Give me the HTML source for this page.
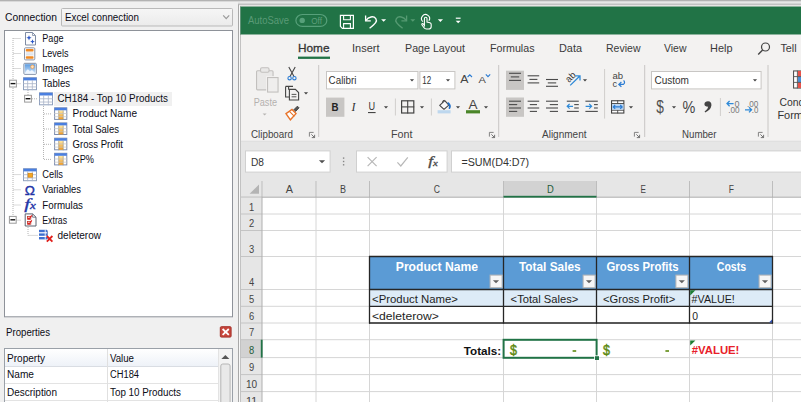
<!DOCTYPE html>
<html lang="en"><head><meta charset="utf-8"><title>Excel connection</title>
<style>
html,body{margin:0;padding:0;background:#f0f0f0;overflow:hidden}
svg{display:block;position:absolute;left:0;top:0}
text{white-space:pre}
</style></head><body>
<svg width="801" height="402" viewBox="0 0 801 402">
<g id="bg">
<rect x="0" y="0" width="801" height="402" fill="#f0f0f0" />
</g>
<g id="grid">
<rect x="241" y="141" width="560" height="261" fill="#e6e6e6" />
<rect x="245.5" y="150.9" width="84.6" height="21.2" fill="#ffffff" stroke="#d0d0d0" stroke-width="1" />
<text x="251" y="165.58" font-family="'Liberation Sans', sans-serif" font-size="10" font-weight="normal" font-style="normal" fill="#333" textLength="13" lengthAdjust="spacingAndGlyphs" >D8</text>
<path d="M318.9 160.25 L325.1 160.25 L322 163.35000000000002 Z" fill="#505050" stroke="none" stroke-width="1" />
<rect x="342.9" y="157.4" width="1.4" height="1.4" fill="#868686" />
<rect x="342.9" y="160.8" width="1.4" height="1.4" fill="#868686" />
<rect x="342.9" y="164.10000000000002" width="1.4" height="1.4" fill="#868686" />
<rect x="356.5" y="150.9" width="90.6" height="21.2" fill="#ffffff" stroke="#d0d0d0" stroke-width="1" />
<path d="M367.6 157.2 L376.6 166.2 M376.6 157.2 L367.6 166.2" fill="none" stroke="#b8b8b8" stroke-width="1.2" />
<path d="M397.4 162.4 L400.8 166 L407.8 157.4" fill="none" stroke="#b8b8b8" stroke-width="1.2" />
<text x="428.2" y="165.3" font-family="'Liberation Serif', serif" font-size="13" font-weight="normal" font-style="italic" fill="#4a4a4a" textLength="4.8" lengthAdjust="spacingAndGlyphs" stroke="#4a4a4a" stroke-width="0.3">f</text>
<text x="433" y="165.6" font-family="'Liberation Serif', serif" font-size="8" font-weight="normal" font-style="italic" fill="#4a4a4a" textLength="4.8" lengthAdjust="spacingAndGlyphs" stroke="#4a4a4a" stroke-width="0.3">x</text>
<rect x="451.5" y="150.9" width="360" height="21.2" fill="#ffffff" stroke="#d0d0d0" stroke-width="1" />
<text x="461.4" y="165.58" font-family="'Liberation Sans', sans-serif" font-size="10" font-weight="normal" font-style="normal" fill="#333" textLength="67.8" lengthAdjust="spacingAndGlyphs" >=SUM(D4:D7)</text>
<rect x="262" y="197" width="539" height="205" fill="#ffffff" />
<line x1="316" y1="197" x2="316" y2="402" stroke="#d6d6d6" stroke-width="1" />
<line x1="369.5" y1="197" x2="369.5" y2="402" stroke="#d6d6d6" stroke-width="1" />
<line x1="503.5" y1="197" x2="503.5" y2="402" stroke="#d6d6d6" stroke-width="1" />
<line x1="596.5" y1="197" x2="596.5" y2="402" stroke="#d6d6d6" stroke-width="1" />
<line x1="689.5" y1="197" x2="689.5" y2="402" stroke="#d6d6d6" stroke-width="1" />
<line x1="772.5" y1="197" x2="772.5" y2="402" stroke="#d6d6d6" stroke-width="1" />
<line x1="262" y1="214" x2="801" y2="214" stroke="#d6d6d6" stroke-width="1" />
<line x1="262" y1="230.5" x2="801" y2="230.5" stroke="#d6d6d6" stroke-width="1" />
<line x1="262" y1="256.5" x2="801" y2="256.5" stroke="#d6d6d6" stroke-width="1" />
<line x1="262" y1="289.5" x2="801" y2="289.5" stroke="#d6d6d6" stroke-width="1" />
<line x1="262" y1="306.3" x2="801" y2="306.3" stroke="#d6d6d6" stroke-width="1" />
<line x1="262" y1="323" x2="801" y2="323" stroke="#d6d6d6" stroke-width="1" />
<line x1="262" y1="339.7" x2="801" y2="339.7" stroke="#d6d6d6" stroke-width="1" />
<line x1="262" y1="357.6" x2="801" y2="357.6" stroke="#d6d6d6" stroke-width="1" />
<line x1="262" y1="374.6" x2="801" y2="374.6" stroke="#d6d6d6" stroke-width="1" />
<line x1="262" y1="391.6" x2="801" y2="391.6" stroke="#d6d6d6" stroke-width="1" />
<line x1="262" y1="408.6" x2="801" y2="408.6" stroke="#d6d6d6" stroke-width="1" />
<rect x="503.5" y="181" width="93.0" height="16" fill="#d2d2d2" />
<line x1="262" y1="181" x2="262" y2="197" stroke="#bdbdbd" stroke-width="1" />
<line x1="316" y1="181" x2="316" y2="197" stroke="#bdbdbd" stroke-width="1" />
<line x1="369.5" y1="181" x2="369.5" y2="197" stroke="#bdbdbd" stroke-width="1" />
<line x1="503.5" y1="181" x2="503.5" y2="197" stroke="#bdbdbd" stroke-width="1" />
<line x1="596.5" y1="181" x2="596.5" y2="197" stroke="#bdbdbd" stroke-width="1" />
<line x1="689.5" y1="181" x2="689.5" y2="197" stroke="#bdbdbd" stroke-width="1" />
<line x1="772.5" y1="181" x2="772.5" y2="197" stroke="#bdbdbd" stroke-width="1" />
<line x1="241" y1="197.2" x2="801" y2="197.2" stroke="#ababab" stroke-width="1" />
<rect x="503.5" y="195.8" width="93.0" height="1.8" fill="#217346" />
<path d="M249.6 193.8 H259 V184.6 Z" fill="#b4b4b4" stroke="none" stroke-width="1" />
<text x="285.7" y="192.78" font-family="'Liberation Sans', sans-serif" font-size="10" font-weight="normal" font-style="normal" fill="#444" textLength="7.2" lengthAdjust="spacingAndGlyphs" >A</text>
<text x="340.04999999999995" y="192.78" font-family="'Liberation Sans', sans-serif" font-size="10" font-weight="normal" font-style="normal" fill="#444" textLength="6.0" lengthAdjust="spacingAndGlyphs" >B</text>
<text x="433.7" y="192.78" font-family="'Liberation Sans', sans-serif" font-size="10" font-weight="normal" font-style="normal" fill="#444" textLength="6.2" lengthAdjust="spacingAndGlyphs" >C</text>
<text x="546.9" y="192.78" font-family="'Liberation Sans', sans-serif" font-size="10" font-weight="normal" font-style="normal" fill="#1f5c3a" textLength="6.8" lengthAdjust="spacingAndGlyphs" >D</text>
<text x="640.6" y="192.78" font-family="'Liberation Sans', sans-serif" font-size="10" font-weight="normal" font-style="normal" fill="#444" textLength="5.4" lengthAdjust="spacingAndGlyphs" >E</text>
<text x="728.6999999999999" y="192.78" font-family="'Liberation Sans', sans-serif" font-size="10" font-weight="normal" font-style="normal" fill="#444" textLength="5.2" lengthAdjust="spacingAndGlyphs" >F</text>
<rect x="241" y="197.5" width="21" height="204.5" fill="#e6e6e6" />
<rect x="241" y="339.7" width="21" height="17.9" fill="#d2d2d2" />
<line x1="241" y1="214" x2="262" y2="214" stroke="#c4c4c4" stroke-width="1" />
<line x1="241" y1="230.5" x2="262" y2="230.5" stroke="#c4c4c4" stroke-width="1" />
<line x1="241" y1="256.5" x2="262" y2="256.5" stroke="#c4c4c4" stroke-width="1" />
<line x1="241" y1="289.5" x2="262" y2="289.5" stroke="#c4c4c4" stroke-width="1" />
<line x1="241" y1="306.3" x2="262" y2="306.3" stroke="#c4c4c4" stroke-width="1" />
<line x1="241" y1="323" x2="262" y2="323" stroke="#c4c4c4" stroke-width="1" />
<line x1="241" y1="339.7" x2="262" y2="339.7" stroke="#c4c4c4" stroke-width="1" />
<line x1="241" y1="357.6" x2="262" y2="357.6" stroke="#c4c4c4" stroke-width="1" />
<line x1="241" y1="374.6" x2="262" y2="374.6" stroke="#c4c4c4" stroke-width="1" />
<line x1="241" y1="391.6" x2="262" y2="391.6" stroke="#c4c4c4" stroke-width="1" />
<line x1="241" y1="408.6" x2="262" y2="408.6" stroke="#c4c4c4" stroke-width="1" />
<line x1="262" y1="197" x2="262" y2="402" stroke="#b0b0b0" stroke-width="1" />
<rect x="260.8" y="339.7" width="1.8" height="17.9" fill="#217346" />
<text x="249.0" y="210.58" font-family="'Liberation Sans', sans-serif" font-size="10" font-weight="normal" font-style="normal" fill="#444" textLength="5.2" lengthAdjust="spacingAndGlyphs" >1</text>
<text x="249.0" y="227.08" font-family="'Liberation Sans', sans-serif" font-size="10" font-weight="normal" font-style="normal" fill="#444" textLength="5.2" lengthAdjust="spacingAndGlyphs" >2</text>
<text x="249.0" y="253.08" font-family="'Liberation Sans', sans-serif" font-size="10" font-weight="normal" font-style="normal" fill="#444" textLength="5.2" lengthAdjust="spacingAndGlyphs" >3</text>
<text x="249.0" y="286.08" font-family="'Liberation Sans', sans-serif" font-size="10" font-weight="normal" font-style="normal" fill="#444" textLength="5.2" lengthAdjust="spacingAndGlyphs" >4</text>
<text x="249.0" y="302.88" font-family="'Liberation Sans', sans-serif" font-size="10" font-weight="normal" font-style="normal" fill="#444" textLength="5.2" lengthAdjust="spacingAndGlyphs" >5</text>
<text x="249.0" y="319.58" font-family="'Liberation Sans', sans-serif" font-size="10" font-weight="normal" font-style="normal" fill="#444" textLength="5.2" lengthAdjust="spacingAndGlyphs" >6</text>
<text x="249.0" y="336.28" font-family="'Liberation Sans', sans-serif" font-size="10" font-weight="normal" font-style="normal" fill="#444" textLength="5.2" lengthAdjust="spacingAndGlyphs" >7</text>
<text x="249.0" y="354.18" font-family="'Liberation Sans', sans-serif" font-size="10" font-weight="normal" font-style="normal" fill="#1f5c3a" textLength="5.2" lengthAdjust="spacingAndGlyphs" >8</text>
<text x="249.0" y="371.18" font-family="'Liberation Sans', sans-serif" font-size="10" font-weight="normal" font-style="normal" fill="#444" textLength="5.2" lengthAdjust="spacingAndGlyphs" >9</text>
<text x="246.0" y="388.18" font-family="'Liberation Sans', sans-serif" font-size="10" font-weight="normal" font-style="normal" fill="#444" textLength="11.2" lengthAdjust="spacingAndGlyphs" >10</text>
<text x="246.0" y="405.18" font-family="'Liberation Sans', sans-serif" font-size="10" font-weight="normal" font-style="normal" fill="#444" textLength="11.2" lengthAdjust="spacingAndGlyphs" >11</text>
<rect x="369.5" y="256.5" width="403.0" height="33.0" fill="#5b9bd5" />
<rect x="369.5" y="289.5" width="403.0" height="16.8" fill="#ddebf7" />
<line x1="369.5" y1="256" x2="369.5" y2="323.6" stroke="#262626" stroke-width="1.3" />
<line x1="503.5" y1="256" x2="503.5" y2="323.6" stroke="#262626" stroke-width="1.3" />
<line x1="596.5" y1="256" x2="596.5" y2="323.6" stroke="#262626" stroke-width="1.3" />
<line x1="689.5" y1="256" x2="689.5" y2="323.6" stroke="#262626" stroke-width="1.3" />
<line x1="772.5" y1="256" x2="772.5" y2="323.6" stroke="#262626" stroke-width="1.3" />
<line x1="369" y1="256.5" x2="773" y2="256.5" stroke="#262626" stroke-width="1.3" />
<line x1="369" y1="289.5" x2="773" y2="289.5" stroke="#262626" stroke-width="1.3" />
<line x1="369" y1="306.3" x2="773" y2="306.3" stroke="#262626" stroke-width="1.3" />
<line x1="369" y1="323" x2="773" y2="323" stroke="#262626" stroke-width="1.6" />
<rect x="490.1" y="275.1" width="12.0" height="12.6" fill="#f6f6f6" stroke="#b4b4b4" stroke-width="1" />
<path d="M492.9 280.15 L499.1 280.15 L496.0 283.25 Z" fill="#606060" stroke="none" stroke-width="1" />
<rect x="583.1" y="275.1" width="12.0" height="12.6" fill="#f6f6f6" stroke="#b4b4b4" stroke-width="1" />
<path d="M585.9 280.15 L592.1 280.15 L589.0 283.25 Z" fill="#606060" stroke="none" stroke-width="1" />
<rect x="675.9" y="275.1" width="12.0" height="12.6" fill="#f6f6f6" stroke="#b4b4b4" stroke-width="1" />
<path d="M678.6999999999999 280.15 L684.9 280.15 L681.8 283.25 Z" fill="#606060" stroke="none" stroke-width="1" />
<rect x="759.1" y="275.1" width="12.0" height="12.6" fill="#f6f6f6" stroke="#b4b4b4" stroke-width="1" />
<path d="M761.9 280.15 L768.1 280.15 L765.0 283.25 Z" fill="#606060" stroke="none" stroke-width="1" />
<text x="395.8" y="271.3" font-family="'Liberation Sans', sans-serif" font-size="12" font-weight="bold" font-style="normal" fill="#ffffff" textLength="82.2" lengthAdjust="spacingAndGlyphs" >Product Name</text>
<text x="519" y="271.3" font-family="'Liberation Sans', sans-serif" font-size="12" font-weight="bold" font-style="normal" fill="#ffffff" textLength="61.6" lengthAdjust="spacingAndGlyphs" >Total Sales</text>
<text x="606.5" y="271.3" font-family="'Liberation Sans', sans-serif" font-size="12" font-weight="bold" font-style="normal" fill="#ffffff" textLength="72.0" lengthAdjust="spacingAndGlyphs" >Gross Profits</text>
<text x="716.8" y="271.3" font-family="'Liberation Sans', sans-serif" font-size="12" font-weight="bold" font-style="normal" fill="#ffffff" textLength="29.2" lengthAdjust="spacingAndGlyphs" >Costs</text>
<text x="372" y="302.61" font-family="'Liberation Sans', sans-serif" font-size="11.2" font-weight="normal" font-style="normal" fill="#1e1e1e" textLength="86" lengthAdjust="spacingAndGlyphs" >&lt;Product Name&gt;</text>
<text x="510.6" y="302.61" font-family="'Liberation Sans', sans-serif" font-size="11.2" font-weight="normal" font-style="normal" fill="#1e1e1e" textLength="67.8" lengthAdjust="spacingAndGlyphs" >&lt;Total Sales&gt;</text>
<text x="603" y="302.61" font-family="'Liberation Sans', sans-serif" font-size="11.2" font-weight="normal" font-style="normal" fill="#1e1e1e" textLength="72.2" lengthAdjust="spacingAndGlyphs" >&lt;Gross Profit&gt;</text>
<text x="691.6" y="302.61" font-family="'Liberation Sans', sans-serif" font-size="11.2" font-weight="normal" font-style="normal" fill="#1e1e1e" textLength="43.2" lengthAdjust="spacingAndGlyphs" >#VALUE!</text>
<text x="372" y="320.01" font-family="'Liberation Sans', sans-serif" font-size="11.2" font-weight="normal" font-style="normal" fill="#1e1e1e" textLength="66.8" lengthAdjust="spacingAndGlyphs" >&lt;deleterow&gt;</text>
<text x="692.2" y="320.01" font-family="'Liberation Sans', sans-serif" font-size="11.2" font-weight="normal" font-style="normal" fill="#1e1e1e" textLength="5.8" lengthAdjust="spacingAndGlyphs" >0</text>
<path d="M690.2 290.2 H695.4 L690.2 295.4 Z" fill="#1e7d34" stroke="none" stroke-width="1" />
<path d="M690.2 340.4 H695.4 L690.2 345.6 Z" fill="#1e7d34" stroke="none" stroke-width="1" />
<path d="M772 319.4 V322.4 H769 Z" fill="#2f4fb0" stroke="none" stroke-width="1" />
<text x="463.8" y="354.52" font-family="'Liberation Sans', sans-serif" font-size="11.8" font-weight="bold" font-style="normal" fill="#111" textLength="37.4" lengthAdjust="spacingAndGlyphs" >Totals:</text>
<text x="510" y="354.62" font-family="'Liberation Sans', sans-serif" font-size="14" font-weight="normal" font-style="normal" fill="#5f8a12" textLength="7" lengthAdjust="spacingAndGlyphs" stroke="#5f8a12" stroke-width="0.45">$</text>
<rect x="572.6" y="350.2" width="3.6" height="1.6" fill="#5f8a12" />
<text x="603" y="354.62" font-family="'Liberation Sans', sans-serif" font-size="14" font-weight="normal" font-style="normal" fill="#5f8a12" textLength="7" lengthAdjust="spacingAndGlyphs" stroke="#5f8a12" stroke-width="0.45">$</text>
<rect x="665.4" y="350.2" width="3.6" height="1.6" fill="#5f8a12" />
<text x="691.8" y="354.22" font-family="'Liberation Sans', sans-serif" font-size="11.8" font-weight="bold" font-style="normal" fill="#e8202a" textLength="47.6" lengthAdjust="spacingAndGlyphs" >#VALUE!</text>
<rect x="503.6" y="339.8" width="93.0" height="18.0" fill="none" stroke="#217346" stroke-width="2" />
<rect x="594.2" y="355.4" width="5.0" height="4.8" fill="#ffffff" />
<rect x="595" y="356.2" width="4" height="3.8" fill="#217346" />
</g>
<g id="ribbon">
<rect x="238" y="2" width="563" height="5" fill="#f0f0f0" />
<rect x="238" y="2.8" width="563" height="0.8" fill="#c4c4c4" />
<rect x="238" y="4.4" width="563" height="1.0" fill="#a4a4a4" />
<rect x="238" y="4.4" width="1" height="397.6" fill="#a8a8a8" />
<rect x="239" y="5.4" width="562" height="1.6" fill="#f6f0f0" />
<rect x="239" y="5.4" width="1" height="396.6" fill="#f8f8f8" />
<rect x="240" y="6" width="1" height="396" fill="#c2c2c2" />
<rect x="240.4" y="6.5" width="560.6" height="28.2" fill="#217346" />
<text x="248" y="24.18" font-family="'Liberation Sans', sans-serif" font-size="10" font-weight="normal" font-style="normal" fill="#5a9a76" textLength="41" lengthAdjust="spacingAndGlyphs" >AutoSave</text>
<rect x="295.90000000000003" y="14.5" width="30.9" height="11.8" fill="none" stroke="#57a07a" stroke-width="1.2" rx="6.5"/>
<circle cx="302.2" cy="20.4" r="2.7" fill="#57a07a"/>
<text x="311.3" y="23.91" font-family="'Liberation Sans', sans-serif" font-size="9.8" font-weight="normal" font-style="normal" fill="#5f9f7b" textLength="10.7" lengthAdjust="spacingAndGlyphs" >Off</text>
<path d="M340.4 15.4 H353.4 V28.3 H342.4 L340.4 26.3 Z" fill="none" stroke="#ffffff" stroke-width="1.2" />
<path d="M343.6 15.4 V19.8 H350.4 V15.4" fill="none" stroke="#ffffff" stroke-width="1.1" />
<path d="M343.6 28.3 V23.6 H350.4 V28.3" fill="none" stroke="#ffffff" stroke-width="1.1" />
<path d="M365.6 15.6 V20.8 H370.8" fill="none" stroke="#ffffff" stroke-width="1.3" />
<path d="M366 20.4 C368.5 16.6 373.6 15.6 375.8 18.6 C377.6 21.2 375.6 23.6 369.6 28.2" fill="none" stroke="#ffffff" stroke-width="1.4" />
<path d="M381.1 19.35 L386.1 19.35 L383.6 21.85 Z" fill="#ffffff" stroke="none" stroke-width="1" />
<path d="M406.6 15.6 V20.8 H401.4" fill="none" stroke="#559a72" stroke-width="1.3" />
<path d="M406.2 20.4 C403.7 16.6 398.6 15.6 396.4 18.6 C394.6 21.2 396.6 23.6 402.6 28.2" fill="none" stroke="#559a72" stroke-width="1.4" />
<path d="M410.3 19.35 L415.3 19.35 L412.8 21.85 Z" fill="#559a72" stroke="none" stroke-width="1" />
<path d="M422.9 21.6 A4 4 0 1 1 428.9 20.8" fill="none" stroke="#ffffff" stroke-width="1.1" />
<path d="M424.4 25.4 V18.6 Q424.4 17.2 425.7 17.2 Q427 17.2 427 18.6 V22 L430 22.8 Q431.2 23.2 431.2 24.6 V26.4 Q431.2 29 428.6 29 H426.4 Q424.8 29 424 27.8 L421.9 24.8 Q421.5 23.7 422.5 23.6 Q423.4 23.6 424.4 25.4 Z" fill="#217346" stroke="#ffffff" stroke-width="1.1" />
<path d="M437.79999999999995 19.3 L443.0 19.3 L440.4 21.900000000000002 Z" fill="#ffffff" stroke="none" stroke-width="1" />
<line x1="455.8" y1="18.2" x2="460.6" y2="18.2" stroke="#ffffff" stroke-width="1.2" />
<path d="M455.7 20.65 L460.7 20.65 L458.2 23.15 Z" fill="#ffffff" stroke="none" stroke-width="1" />
<rect x="241" y="34.7" width="560" height="106.1" fill="#f3f2f1" />
<rect x="241" y="140.8" width="560" height="0.8" fill="#dcdcdc" />
<text x="298" y="52.14" font-family="'Liberation Sans', sans-serif" font-size="11" font-weight="normal" font-style="normal" fill="#353535" textLength="31.5" lengthAdjust="spacingAndGlyphs" stroke="#353535" stroke-width="0.3">Home</text>
<text x="352" y="52.14" font-family="'Liberation Sans', sans-serif" font-size="11" font-weight="normal" font-style="normal" fill="#3a3a3a" textLength="27.5" lengthAdjust="spacingAndGlyphs" >Insert</text>
<text x="405" y="52.14" font-family="'Liberation Sans', sans-serif" font-size="11" font-weight="normal" font-style="normal" fill="#3a3a3a" textLength="60" lengthAdjust="spacingAndGlyphs" >Page Layout</text>
<text x="490" y="52.14" font-family="'Liberation Sans', sans-serif" font-size="11" font-weight="normal" font-style="normal" fill="#3a3a3a" textLength="44.5" lengthAdjust="spacingAndGlyphs" >Formulas</text>
<text x="559" y="52.14" font-family="'Liberation Sans', sans-serif" font-size="11" font-weight="normal" font-style="normal" fill="#3a3a3a" textLength="23" lengthAdjust="spacingAndGlyphs" >Data</text>
<text x="606" y="52.14" font-family="'Liberation Sans', sans-serif" font-size="11" font-weight="normal" font-style="normal" fill="#3a3a3a" textLength="34.5" lengthAdjust="spacingAndGlyphs" >Review</text>
<text x="664" y="52.14" font-family="'Liberation Sans', sans-serif" font-size="11" font-weight="normal" font-style="normal" fill="#3a3a3a" textLength="22.5" lengthAdjust="spacingAndGlyphs" >View</text>
<text x="710" y="52.14" font-family="'Liberation Sans', sans-serif" font-size="11" font-weight="normal" font-style="normal" fill="#3a3a3a" textLength="22.5" lengthAdjust="spacingAndGlyphs" >Help</text>
<rect x="298" y="56.6" width="32" height="2.3" fill="#217346" />
<circle cx="765.5" cy="47" r="4" fill="none" stroke="#444" stroke-width="1.2"/>
<line x1="762.6" y1="50" x2="758.2" y2="54.4" stroke="#444" stroke-width="1.4" />
<text x="780.4" y="52.14" font-family="'Liberation Sans', sans-serif" font-size="11" font-weight="normal" font-style="normal" fill="#3a3a3a" textLength="16.2" lengthAdjust="spacingAndGlyphs" >Tell</text>
<line x1="318.7" y1="65" x2="318.7" y2="137" stroke="#c8c6c4" stroke-width="1" />
<line x1="498.7" y1="65" x2="498.7" y2="137" stroke="#c8c6c4" stroke-width="1" />
<line x1="644.7" y1="65" x2="644.7" y2="137" stroke="#c8c6c4" stroke-width="1" />
<line x1="768" y1="65" x2="768" y2="137" stroke="#c8c6c4" stroke-width="1" />
<text x="251" y="138.28" font-family="'Liberation Sans', sans-serif" font-size="10" font-weight="normal" font-style="normal" fill="#444" textLength="42" lengthAdjust="spacingAndGlyphs" >Clipboard</text>
<text x="391" y="138.28" font-family="'Liberation Sans', sans-serif" font-size="10" font-weight="normal" font-style="normal" fill="#444" textLength="21.5" lengthAdjust="spacingAndGlyphs" >Font</text>
<text x="542" y="138.28" font-family="'Liberation Sans', sans-serif" font-size="10" font-weight="normal" font-style="normal" fill="#444" textLength="44.5" lengthAdjust="spacingAndGlyphs" >Alignment</text>
<text x="682" y="138.28" font-family="'Liberation Sans', sans-serif" font-size="10" font-weight="normal" font-style="normal" fill="#444" textLength="34.5" lengthAdjust="spacingAndGlyphs" >Number</text>
<path d="M309.4 136.6 V132.4 H313.6" fill="none" stroke="#777" stroke-width="0.9" />
<path d="M311.4 134.4 L314.6 137.6 M314.6 134.8 V137.6 H311.8" fill="none" stroke="#666" stroke-width="0.9" />
<path d="M489.4 136.6 V132.4 H493.6" fill="none" stroke="#777" stroke-width="0.9" />
<path d="M491.4 134.4 L494.6 137.6 M494.6 134.8 V137.6 H491.8" fill="none" stroke="#666" stroke-width="0.9" />
<path d="M634.4 136.6 V132.4 H638.6" fill="none" stroke="#777" stroke-width="0.9" />
<path d="M636.4 134.4 L639.6 137.6 M639.6 134.8 V137.6 H636.8" fill="none" stroke="#666" stroke-width="0.9" />
<path d="M758.4 136.6 V132.4 H762.6" fill="none" stroke="#777" stroke-width="0.9" />
<path d="M760.4 134.4 L763.6 137.6 M763.6 134.8 V137.6 H760.8" fill="none" stroke="#666" stroke-width="0.9" />
<rect x="256.55" y="70.75" width="16.5" height="19.1" fill="#e9e8e7" stroke="#c2c0be" stroke-width="1.1" rx="1"/>
<rect x="260.55" y="67.75" width="8.5" height="4.5" fill="#e9e8e7" stroke="#c2c0be" stroke-width="1.1" rx="1.4"/>
<rect x="266.7" y="76.7" width="12.2" height="16.2" fill="#f3f2f1" stroke="#f3f2f1" stroke-width="1" />
<rect x="267.55" y="77.55" width="10.5" height="14.5" fill="#efeeed" stroke="#c2c0be" stroke-width="1.1" />
<text x="253.7" y="105.65" font-family="'Liberation Sans', sans-serif" font-size="10.2" font-weight="normal" font-style="normal" fill="#b3b1af" textLength="23.3" lengthAdjust="spacingAndGlyphs" >Paste</text>
<path d="M262.6 113.4 L266.6 113.4 L264.6 115.4 Z" fill="#b8b6b4" stroke="none" stroke-width="1" />
<path d="M288.8 67 L294 76.6 M295.2 67 L290 76.6" fill="none" stroke="#444" stroke-width="1.1" />
<circle cx="289.6" cy="78.2" r="1.7" fill="none" stroke="#2b7cd3" stroke-width="1.1"/><circle cx="294.4" cy="78.2" r="1.7" fill="none" stroke="#2b7cd3" stroke-width="1.1"/>
<path d="M288.6 89.8 V86.4 H293 M285.6 86.4 H288.6" fill="none" stroke="#444" stroke-width="1.1" />
<path d="M285.6 86.4 V97 H289" fill="none" stroke="#444" stroke-width="1.1" />
<path d="M289.4 89.4 H295.4 L298.6 92.6 V100 H289.4 Z" fill="#f3f2f1" stroke="#444" stroke-width="1.1" />
<line x1="291.6" y1="94.4" x2="296.4" y2="94.4" stroke="#444" stroke-width="0.9" />
<line x1="291.6" y1="96.8" x2="296.4" y2="96.8" stroke="#444" stroke-width="0.9" />
<path d="M303.9 92.35000000000001 L308.1 92.35000000000001 L306 94.45 Z" fill="#444" stroke="none" stroke-width="1" />
<path d="M293.6 110 L297.4 106.2 L299 107.8 L295.4 111.6" fill="#555" stroke="#444" stroke-width="1" />
<path d="M286 113.6 L292 109.4 L296 113.6 L290.4 119.8 Z" fill="#fff" stroke="#e8742a" stroke-width="1.4" />
<line x1="289.4" y1="111.4" x2="294.4" y2="116.4" stroke="#e8742a" stroke-width="1.2" />
<rect x="326.5" y="71.5" width="91.4" height="17.4" fill="#ffffff" stroke="#c8c6c4" stroke-width="1" />
<rect x="419.9" y="71.5" width="35.0" height="17.4" fill="#ffffff" stroke="#c8c6c4" stroke-width="1" />
<text x="328.6" y="83.78" font-family="'Liberation Sans', sans-serif" font-size="10" font-weight="normal" font-style="normal" fill="#333" textLength="27.8" lengthAdjust="spacingAndGlyphs" >Calibri</text>
<text x="422.3" y="83.78" font-family="'Liberation Sans', sans-serif" font-size="10" font-weight="normal" font-style="normal" fill="#333" textLength="8.9" lengthAdjust="spacingAndGlyphs" >12</text>
<path d="M409.9 79.35000000000001 L414.1 79.35000000000001 L412 81.45 Z" fill="#444" stroke="none" stroke-width="1" />
<path d="M445.9 79.35000000000001 L450.1 79.35000000000001 L448 81.45 Z" fill="#444" stroke="none" stroke-width="1" />
<text x="460.2" y="83.34" font-family="'Liberation Sans', sans-serif" font-size="11" font-weight="normal" font-style="normal" fill="#444" textLength="8.2" lengthAdjust="spacingAndGlyphs" >A</text>
<path d="M467.6 77 L469.8 74.8 L472 77" fill="none" stroke="#2b7cd3" stroke-width="1.1" />
<text x="478.4" y="83.44" font-family="'Liberation Sans', sans-serif" font-size="9.6" font-weight="normal" font-style="normal" fill="#444" textLength="7.4" lengthAdjust="spacingAndGlyphs" >A</text>
<path d="M485.8 74.4 L488 76.6 L490.2 74.4" fill="none" stroke="#2b7cd3" stroke-width="1.1" />
<rect x="326" y="97.6" width="18.4" height="19.2" fill="#c8c6c4" />
<text x="331.6" y="111.32" font-family="'Liberation Sans', sans-serif" font-size="11.5" font-weight="bold" font-style="normal" fill="#222" textLength="7.0" lengthAdjust="spacingAndGlyphs" >B</text>
<text x="351.4" y="111.32" font-family="'Liberation Serif', serif" font-size="11.5" font-weight="normal" font-style="italic" fill="#333" textLength="4.0" lengthAdjust="spacingAndGlyphs" >I</text>
<text x="368.4" y="110.34" font-family="'Liberation Sans', sans-serif" font-size="11" font-weight="normal" font-style="normal" fill="#333" textLength="6.6" lengthAdjust="spacingAndGlyphs" >U</text>
<line x1="368" y1="112.6" x2="375.6" y2="112.6" stroke="#333" stroke-width="1" />
<path d="M383.9 106.35000000000001 L388.1 106.35000000000001 L386 108.45 Z" fill="#444" stroke="none" stroke-width="1" />
<line x1="395.4" y1="98.5" x2="395.4" y2="115.5" stroke="#d0cecc" stroke-width="1" />
<rect x="401.6" y="100.8" width="12.2" height="12.2" fill="none" stroke="#444" stroke-width="1.2" />
<line x1="407.7" y1="100.4" x2="407.7" y2="113.4" stroke="#444" stroke-width="1.1" />
<line x1="401.2" y1="106.9" x2="414.2" y2="106.9" stroke="#444" stroke-width="1.1" />
<path d="M419.9 106.35000000000001 L424.1 106.35000000000001 L422 108.45 Z" fill="#444" stroke="none" stroke-width="1" />
<line x1="431.4" y1="98.5" x2="431.4" y2="115.5" stroke="#d0cecc" stroke-width="1" />
<path d="M444.8 100.6 L448.8 105.2 L444 109.3 L439.7 105.3 Z" fill="#f8f8f8" stroke="#444" stroke-width="1.1" stroke-linejoin="round"/>
<path d="M442.4 102.8 Q442.6 99.8 444.6 100.4" fill="none" stroke="#444" stroke-width="1" />
<path d="M448.3 103.2 Q450.9 105.6 449.5 108.2" fill="none" stroke="#1f6fc8" stroke-width="1.7" stroke-linecap="round"/>
<rect x="437.6" y="110.2" width="13.0" height="3.2" fill="#bdd7ee" />
<path d="M455.9 106.35000000000001 L460.1 106.35000000000001 L458 108.45 Z" fill="#444" stroke="none" stroke-width="1" />
<text x="468.6" y="108.8" font-family="'Liberation Sans', sans-serif" font-size="12" font-weight="normal" font-style="normal" fill="#444" textLength="9.0" lengthAdjust="spacingAndGlyphs" >A</text>
<rect x="466" y="110.2" width="14" height="3.2" fill="#4a8529" />
<path d="M483.9 106.35000000000001 L488.1 106.35000000000001 L486 108.45 Z" fill="#444" stroke="none" stroke-width="1" />
<rect x="506" y="70.7" width="18" height="19.2" fill="#c8c6c4" />
<rect x="506" y="97.5" width="18" height="19.3" fill="#c8c6c4" />
<line x1="509" y1="73.3" x2="521" y2="73.3" stroke="#4a4a4a" stroke-width="1.1" />
<line x1="510.8" y1="76.9" x2="519.2" y2="76.9" stroke="#4a4a4a" stroke-width="1.1" />
<line x1="509" y1="80.4" x2="521" y2="80.4" stroke="#4a4a4a" stroke-width="1.1" />
<line x1="527.6" y1="75.8" x2="539.2" y2="75.8" stroke="#4a4a4a" stroke-width="1.1" />
<line x1="529.4" y1="79.4" x2="537.4000000000001" y2="79.4" stroke="#4a4a4a" stroke-width="1.1" />
<line x1="527.6" y1="82.9" x2="539.2" y2="82.9" stroke="#4a4a4a" stroke-width="1.1" />
<line x1="546" y1="79.5" x2="558" y2="79.5" stroke="#4a4a4a" stroke-width="1.1" />
<line x1="547.8" y1="82.9" x2="556.2" y2="82.9" stroke="#4a4a4a" stroke-width="1.1" />
<line x1="546" y1="86.3" x2="558" y2="86.3" stroke="#4a4a4a" stroke-width="1.1" />
<text x="565.2" y="80.37" font-family="'Liberation Sans', sans-serif" font-size="9.4" font-weight="normal" font-style="normal" fill="#333" textLength="10.4" lengthAdjust="spacingAndGlyphs" transform="rotate(-45 570.2 77)">ab</text>
<path d="M570.2 85.4 L579.6 76.2 M575.4 75.8 H580 V80.4" fill="none" stroke="#2f8ad8" stroke-width="1.3" />
<path d="M582.9 79.35000000000001 L587.1 79.35000000000001 L585 81.45 Z" fill="#444" stroke="none" stroke-width="1" />
<line x1="509" y1="101.2" x2="521" y2="101.2" stroke="#4a4a4a" stroke-width="1.1" />
<line x1="509" y1="104.6" x2="517.2" y2="104.6" stroke="#4a4a4a" stroke-width="1.1" />
<line x1="509" y1="108" x2="521" y2="108" stroke="#4a4a4a" stroke-width="1.1" />
<line x1="509" y1="111.4" x2="517.2" y2="111.4" stroke="#4a4a4a" stroke-width="1.1" />
<line x1="527.6" y1="101.2" x2="539.2" y2="101.2" stroke="#4a4a4a" stroke-width="1.1" />
<line x1="529.8000000000001" y1="104.6" x2="537.0" y2="104.6" stroke="#4a4a4a" stroke-width="1.1" />
<line x1="527.6" y1="108" x2="539.2" y2="108" stroke="#4a4a4a" stroke-width="1.1" />
<line x1="529.8000000000001" y1="111.4" x2="537.0" y2="111.4" stroke="#4a4a4a" stroke-width="1.1" />
<line x1="546" y1="101.2" x2="558" y2="101.2" stroke="#4a4a4a" stroke-width="1.1" />
<line x1="549.8" y1="104.6" x2="558" y2="104.6" stroke="#4a4a4a" stroke-width="1.1" />
<line x1="546" y1="108" x2="558" y2="108" stroke="#4a4a4a" stroke-width="1.1" />
<line x1="549.8" y1="111.4" x2="558" y2="111.4" stroke="#4a4a4a" stroke-width="1.1" />
<line x1="566.8" y1="101.2" x2="578.8" y2="101.2" stroke="#4a4a4a" stroke-width="1.1" />
<line x1="566.8" y1="111.4" x2="578.8" y2="111.4" stroke="#4a4a4a" stroke-width="1.1" />
<line x1="574.2" y1="104.6" x2="578.8" y2="104.6" stroke="#4a4a4a" stroke-width="1.1" />
<line x1="574.2" y1="108" x2="578.8" y2="108" stroke="#4a4a4a" stroke-width="1.1" />
<path d="M573 106.3 H567.2 M569.6 103.9 L567.2 106.3 L569.6 108.7" fill="none" stroke="#2f8ad8" stroke-width="1.2" />
<line x1="585.4" y1="101.2" x2="597.8" y2="101.2" stroke="#4a4a4a" stroke-width="1.1" />
<line x1="585.4" y1="111.4" x2="597.8" y2="111.4" stroke="#4a4a4a" stroke-width="1.1" />
<line x1="594" y1="104.6" x2="597.8" y2="104.6" stroke="#4a4a4a" stroke-width="1.1" />
<line x1="594" y1="108" x2="597.8" y2="108" stroke="#4a4a4a" stroke-width="1.1" />
<path d="M585.6 106.3 H591.6 M589.2 103.9 L591.6 106.3 L589.2 108.7" fill="none" stroke="#2f8ad8" stroke-width="1.2" />
<line x1="604.6" y1="69" x2="604.6" y2="118.6" stroke="#d0cecc" stroke-width="1" />
<text x="612.4" y="79.15" font-family="'Liberation Sans', sans-serif" font-size="8.8" font-weight="normal" font-style="normal" fill="#444" textLength="10.6" lengthAdjust="spacingAndGlyphs" >ab</text>
<text x="612.4" y="86.55" font-family="'Liberation Sans', sans-serif" font-size="8.8" font-weight="normal" font-style="normal" fill="#444" textLength="4.6" lengthAdjust="spacingAndGlyphs" >c</text>
<path d="M619 84.4 H623.4 Q625.6 82.6 623.6 80.4 M621.4 82 L618.8 84.4 L621.4 86.8" fill="none" stroke="#2b7cd3" stroke-width="1.2" />
<rect x="611.55" y="100.75" width="12.3" height="12.3" fill="#fff" stroke="#444" stroke-width="1.1" />
<line x1="611.4" y1="103.6" x2="624" y2="103.6" stroke="#444" stroke-width="1" />
<line x1="611.4" y1="110.2" x2="624" y2="110.2" stroke="#444" stroke-width="1" />
<line x1="617.7" y1="100.4" x2="617.7" y2="103.6" stroke="#444" stroke-width="0.9" />
<line x1="617.7" y1="110.2" x2="617.7" y2="113.4" stroke="#444" stroke-width="0.9" />
<rect x="612" y="104.2" width="11.6" height="5.4" fill="#b5d3f3" />
<path d="M613.4 106.9 H622 M615.2 105 L613.2 106.9 L615.2 108.8 M620.2 105 L622.2 106.9 L620.2 108.8" fill="none" stroke="#2b7cd3" stroke-width="1.1" />
<path d="M628.9 106.35000000000001 L633.1 106.35000000000001 L631 108.45 Z" fill="#444" stroke="none" stroke-width="1" />
<rect x="651.5" y="71.5" width="109.6" height="17.4" fill="#ffffff" stroke="#c8c6c4" stroke-width="1" />
<text x="654.4" y="83.78" font-family="'Liberation Sans', sans-serif" font-size="10" font-weight="normal" font-style="normal" fill="#333" textLength="34.6" lengthAdjust="spacingAndGlyphs" >Custom</text>
<path d="M752.9 79.35000000000001 L757.1 79.35000000000001 L755 81.45 Z" fill="#444" stroke="none" stroke-width="1" />
<text x="656.2" y="112.68" font-family="'Liberation Sans', sans-serif" font-size="17.5" font-weight="normal" font-style="normal" fill="#505050" textLength="7.6" lengthAdjust="spacingAndGlyphs" >$</text>
<path d="M671.9 106.35000000000001 L676.1 106.35000000000001 L674 108.45 Z" fill="#444" stroke="none" stroke-width="1" />
<text x="682.6" y="112.61" font-family="'Liberation Sans', sans-serif" font-size="16.5" font-weight="normal" font-style="normal" fill="#444" textLength="12.8" lengthAdjust="spacingAndGlyphs" >%</text>
<path d="M708 101.2 Q711.8 101.4 711.4 105.6 Q710.8 110 705.2 112.4 L704.6 111.4 Q708 109.4 708.2 106.8 Q704.4 106.6 704.4 104 Q704.8 101.2 708 101.2 Z" fill="#444" stroke="none" stroke-width="1" />
<line x1="720.4" y1="98" x2="720.4" y2="116" stroke="#d0cecc" stroke-width="1" />
<path d="M733.6 103.6 H727 M729.6 101 L727 103.6 L729.6 106.2" fill="none" stroke="#2f8ad8" stroke-width="1.3" />
<text x="734.6" y="106.55" font-family="'Liberation Sans', sans-serif" font-size="8.8" font-weight="normal" font-style="normal" fill="#7a7a7a" textLength="5.0" lengthAdjust="spacingAndGlyphs" >0</text>
<text x="728.2" y="113.45" font-family="'Liberation Sans', sans-serif" font-size="8.8" font-weight="normal" font-style="normal" fill="#7a7a7a" textLength="11.4" lengthAdjust="spacingAndGlyphs" >.00</text>
<text x="747" y="106.55" font-family="'Liberation Sans', sans-serif" font-size="8.8" font-weight="normal" font-style="normal" fill="#7a7a7a" textLength="11.4" lengthAdjust="spacingAndGlyphs" >.00</text>
<text x="751.8" y="113.45" font-family="'Liberation Sans', sans-serif" font-size="8.8" font-weight="normal" font-style="normal" fill="#7a7a7a" textLength="6.6" lengthAdjust="spacingAndGlyphs" >.0</text>
<path d="M745 109.8 H751.6 M749 107.2 L751.6 109.8 L749 112.4" fill="none" stroke="#2f8ad8" stroke-width="1.3" />
<rect x="793.55" y="70.95" width="11.9" height="17.1" fill="#fff" stroke="#555" stroke-width="1.1" />
<rect x="797.8" y="71" width="4.2" height="5.6" fill="#e8534b" />
<rect x="797.8" y="76.6" width="4.2" height="5.8" fill="#4a90d9" />
<rect x="797.8" y="82.4" width="4.2" height="5.6" fill="#e8534b" />
<line x1="797.4" y1="70.6" x2="797.4" y2="88.4" stroke="#555" stroke-width="0.9" />
<line x1="793.4" y1="76.6" x2="806" y2="76.6" stroke="#555" stroke-width="0.9" />
<line x1="793.4" y1="82.4" x2="806" y2="82.4" stroke="#555" stroke-width="0.9" />
<text x="779.6" y="105.94" font-family="'Liberation Sans', sans-serif" font-size="11" font-weight="normal" font-style="normal" fill="#333" textLength="24.8" lengthAdjust="spacingAndGlyphs" >Cond</text>
<text x="777.4" y="119.34" font-family="'Liberation Sans', sans-serif" font-size="11" font-weight="normal" font-style="normal" fill="#333" textLength="25.6" lengthAdjust="spacingAndGlyphs" >Form</text>
</g>
<g id="left">
<rect x="0" y="0" width="238" height="402" fill="#f0f0f0" />
<rect x="0" y="0" width="801" height="1" fill="#b2b2b2" />
<rect x="0" y="1" width="801" height="1" fill="#d9d9d9" />
<text x="5" y="20.58" font-family="'Liberation Sans', sans-serif" font-size="10" font-weight="normal" font-style="normal" fill="#0c0c16" textLength="52" lengthAdjust="spacingAndGlyphs" >Connection</text>
<defs><linearGradient id="cb" x1="0" y1="0" x2="0" y2="1"><stop offset="0" stop-color="#f6f6f6"/><stop offset="1" stop-color="#ebebeb"/></linearGradient><linearGradient id="hd" x1="0" y1="0" x2="0" y2="1"><stop offset="0" stop-color="#ffffff"/><stop offset="1" stop-color="#eef2f8"/></linearGradient><linearGradient id="sky" x1="0" y1="0" x2="0" y2="1"><stop offset="0" stop-color="#5b9be0"/><stop offset="1" stop-color="#cfe4fa"/></linearGradient><linearGradient id="org" x1="0" y1="0" x2="0" y2="1"><stop offset="0" stop-color="#fde9a8"/><stop offset="1" stop-color="#f39a1e"/></linearGradient></defs>
<rect x="61.5" y="8.5" width="171" height="17.5" fill="url(#cb)" stroke="#b9b9b9" stroke-width="1" rx="1"/>
<text x="65" y="20.58" font-family="'Liberation Sans', sans-serif" font-size="10" font-weight="normal" font-style="normal" fill="#0c0c16" textLength="74" lengthAdjust="spacingAndGlyphs" >Excel connection</text>
<path d="M223.2 15.4 L226.2 18.6 L229.2 15.4" fill="none" stroke="#9a9a9a" stroke-width="1.2" />
<rect x="4.5" y="30.5" width="228" height="286.3" fill="#ffffff" stroke="#8e9299" stroke-width="1" />
<line x1="13" y1="38" x2="13" y2="216" stroke="#b4b4b4" stroke-width="1" stroke-dasharray="1 1"/>
<line x1="13.5" y1="38.5" x2="21.5" y2="38.5" stroke="#b4b4b4" stroke-width="1" stroke-dasharray="1 1"/>
<line x1="13.5" y1="53.5" x2="21.5" y2="53.5" stroke="#b4b4b4" stroke-width="1" stroke-dasharray="1 1"/>
<line x1="13.5" y1="68.5" x2="21.5" y2="68.5" stroke="#b4b4b4" stroke-width="1" stroke-dasharray="1 1"/>
<line x1="13.5" y1="83.7" x2="21.5" y2="83.7" stroke="#b4b4b4" stroke-width="1" stroke-dasharray="1 1"/>
<line x1="13.5" y1="174.6" x2="21.5" y2="174.6" stroke="#b4b4b4" stroke-width="1" stroke-dasharray="1 1"/>
<line x1="13.5" y1="189.8" x2="21.5" y2="189.8" stroke="#b4b4b4" stroke-width="1" stroke-dasharray="1 1"/>
<line x1="13.5" y1="205" x2="21.5" y2="205" stroke="#b4b4b4" stroke-width="1" stroke-dasharray="1 1"/>
<line x1="13.5" y1="220.2" x2="21.5" y2="220.2" stroke="#b4b4b4" stroke-width="1" stroke-dasharray="1 1"/>
<line x1="28" y1="90" x2="28" y2="95" stroke="#b4b4b4" stroke-width="1" stroke-dasharray="1 1"/>
<line x1="32" y1="98.8" x2="38" y2="98.8" stroke="#b4b4b4" stroke-width="1" stroke-dasharray="1 1"/>
<line x1="43.5" y1="106" x2="43.5" y2="159.5" stroke="#b4b4b4" stroke-width="1" stroke-dasharray="1 1"/>
<line x1="44" y1="113.9" x2="51.5" y2="113.9" stroke="#b4b4b4" stroke-width="1" stroke-dasharray="1 1"/>
<line x1="44" y1="129" x2="51.5" y2="129" stroke="#b4b4b4" stroke-width="1" stroke-dasharray="1 1"/>
<line x1="44" y1="144.3" x2="51.5" y2="144.3" stroke="#b4b4b4" stroke-width="1" stroke-dasharray="1 1"/>
<line x1="44" y1="159.4" x2="51.5" y2="159.4" stroke="#b4b4b4" stroke-width="1" stroke-dasharray="1 1"/>
<line x1="28" y1="227" x2="28" y2="235.5" stroke="#b4b4b4" stroke-width="1" stroke-dasharray="1 1"/>
<line x1="28.5" y1="235.4" x2="38" y2="235.4" stroke="#b4b4b4" stroke-width="1" stroke-dasharray="1 1"/>
<rect x="9.6" y="80.2" width="6.8" height="6.8" fill="#ffffff" stroke="#9a9a9a" stroke-width="1" />
<line x1="10.6" y1="83.60000000000001" x2="15.4" y2="83.60000000000001" stroke="#111" stroke-width="1.4" />
<rect x="24.6" y="95.3" width="6.8" height="6.8" fill="#ffffff" stroke="#9a9a9a" stroke-width="1" />
<line x1="25.6" y1="98.7" x2="30.4" y2="98.7" stroke="#111" stroke-width="1.4" />
<rect x="9.4" y="216.39999999999998" width="6.8" height="6.8" fill="#ffffff" stroke="#9a9a9a" stroke-width="1" />
<line x1="10.4" y1="219.79999999999998" x2="15.200000000000001" y2="219.79999999999998" stroke="#111" stroke-width="1.4" />
<rect x="54" y="92" width="118" height="14" fill="#f0f0f0" />
<path d="M25.5 32.5 H32.5 L35.5 35.5 V45 H25.5 Z" fill="#fdfdfe" stroke="#7f8ca3" stroke-width="1" />
<path d="M32.5 32.5 V35.5 H35.5" fill="none" stroke="#7f8ca3" stroke-width="0.8" />
<path d="M29 35.199999999999996 L29.78 37.019999999999996 L31.6 37.8 L29.78 38.58 L29 40.4 L28.22 38.58 L26.4 37.8 L28.22 37.019999999999996 Z" fill="#2c57c7" stroke="none" stroke-width="1" />
<path d="M32.5 39.2 L33.22 40.88 L34.9 41.6 L33.22 42.32 L32.5 44.0 L31.78 42.32 L30.1 41.6 L31.78 40.88 Z" fill="#2c57c7" stroke="none" stroke-width="1" />
<rect x="24.5" y="47.8" width="10.3" height="12.1" fill="#fbfbfc" stroke="#8a93a6" stroke-width="1" rx="1"/>
<rect x="25.8" y="49" width="7.7" height="2.5" fill="#f08a24" rx="0.8"/>
<rect x="25.8" y="56.3" width="7.7" height="2.4" fill="#f08a24" rx="0.8"/>
<line x1="26" y1="53" x2="33.4" y2="53" stroke="#c9cfdb" stroke-width="0.8" />
<line x1="26" y1="54.8" x2="33.4" y2="54.8" stroke="#c9cfdb" stroke-width="0.8" />
<rect x="23.9" y="63.3" width="12.4" height="11.0" fill="#ffffff" stroke="#7b8aa3" stroke-width="1" rx="0.8"/>
<rect x="24.8" y="64.2" width="10.6" height="9.2" fill="url(#sky)" />
<circle cx="32.4" cy="66.8" r="1.7" fill="#ffe3c0" stroke="#f5a04a" stroke-width="0.8"/>
<path d="M24.8 73.4 L27 69.8 Q28.2 68.8 29.2 70.4 L30 71.4 Q31.4 69.6 32.6 70.6 L35.4 73.4 Z" fill="#eef6ff" stroke="none" stroke-width="1" />
<rect x="23.5" y="77.7" width="13" height="12.0" fill="#ffffff" stroke="#8fa0bd" stroke-width="1" />
<rect x="23.5" y="77.7" width="13.0" height="2.7" fill="#4a7fe0" />
<line x1="27.666666666666668" y1="80.2" x2="27.666666666666668" y2="90.2" stroke="#a9b4c8" stroke-width="0.8" />
<line x1="32.333333333333336" y1="80.2" x2="32.333333333333336" y2="90.2" stroke="#a9b4c8" stroke-width="0.8" />
<line x1="23" y1="83.66666666666667" x2="37" y2="83.66666666666667" stroke="#a9b4c8" stroke-width="0.8" />
<line x1="23" y1="86.93333333333334" x2="37" y2="86.93333333333334" stroke="#a9b4c8" stroke-width="0.8" />
<rect x="39.5" y="92.8" width="13" height="12.0" fill="#ffffff" stroke="#8fa0bd" stroke-width="1" />
<rect x="39.5" y="92.8" width="13.0" height="2.7" fill="#4a7fe0" />
<line x1="43.666666666666664" y1="95.3" x2="43.666666666666664" y2="105.3" stroke="#a9b4c8" stroke-width="0.8" />
<line x1="48.333333333333336" y1="95.3" x2="48.333333333333336" y2="105.3" stroke="#a9b4c8" stroke-width="0.8" />
<line x1="39" y1="98.76666666666667" x2="53" y2="98.76666666666667" stroke="#a9b4c8" stroke-width="0.8" />
<line x1="39" y1="102.03333333333333" x2="53" y2="102.03333333333333" stroke="#a9b4c8" stroke-width="0.8" />
<rect x="54.6" y="107.80000000000001" width="12.2" height="11.6" fill="#ffffff" stroke="#7d8db0" stroke-width="1" />
<rect x="58.7" y="110.30000000000001" width="4.5" height="9.0" fill="url(#org)" />
<rect x="54.6" y="107.80000000000001" width="12.2" height="2.5" fill="#4a7fe0" />
<line x1="58.7" y1="110.30000000000001" x2="58.7" y2="119.9" stroke="#a59a7d" stroke-width="0.7" />
<line x1="63.2" y1="110.30000000000001" x2="63.2" y2="119.9" stroke="#a59a7d" stroke-width="0.7" />
<line x1="54.1" y1="113.50000000000001" x2="67.3" y2="113.50000000000001" stroke="#c3c3c3" stroke-width="0.7" />
<line x1="54.1" y1="116.70000000000002" x2="67.3" y2="116.70000000000002" stroke="#c3c3c3" stroke-width="0.7" />
<rect x="54.6" y="122.9" width="12.2" height="11.6" fill="#ffffff" stroke="#7d8db0" stroke-width="1" />
<rect x="58.7" y="125.4" width="4.5" height="9.0" fill="url(#org)" />
<rect x="54.6" y="122.9" width="12.2" height="2.5" fill="#4a7fe0" />
<line x1="58.7" y1="125.4" x2="58.7" y2="135.0" stroke="#a59a7d" stroke-width="0.7" />
<line x1="63.2" y1="125.4" x2="63.2" y2="135.0" stroke="#a59a7d" stroke-width="0.7" />
<line x1="54.1" y1="128.6" x2="67.3" y2="128.6" stroke="#c3c3c3" stroke-width="0.7" />
<line x1="54.1" y1="131.8" x2="67.3" y2="131.8" stroke="#c3c3c3" stroke-width="0.7" />
<rect x="54.6" y="138.20000000000002" width="12.2" height="11.6" fill="#ffffff" stroke="#7d8db0" stroke-width="1" />
<rect x="58.7" y="140.70000000000002" width="4.5" height="9.0" fill="url(#org)" />
<rect x="54.6" y="138.20000000000002" width="12.2" height="2.5" fill="#4a7fe0" />
<line x1="58.7" y1="140.70000000000002" x2="58.7" y2="150.3" stroke="#a59a7d" stroke-width="0.7" />
<line x1="63.2" y1="140.70000000000002" x2="63.2" y2="150.3" stroke="#a59a7d" stroke-width="0.7" />
<line x1="54.1" y1="143.9" x2="67.3" y2="143.9" stroke="#c3c3c3" stroke-width="0.7" />
<line x1="54.1" y1="147.10000000000002" x2="67.3" y2="147.10000000000002" stroke="#c3c3c3" stroke-width="0.7" />
<rect x="54.6" y="153.3" width="12.2" height="11.6" fill="#ffffff" stroke="#7d8db0" stroke-width="1" />
<rect x="58.7" y="155.8" width="4.5" height="9.0" fill="url(#org)" />
<rect x="54.6" y="153.3" width="12.2" height="2.5" fill="#4a7fe0" />
<line x1="58.7" y1="155.8" x2="58.7" y2="165.4" stroke="#a59a7d" stroke-width="0.7" />
<line x1="63.2" y1="155.8" x2="63.2" y2="165.4" stroke="#a59a7d" stroke-width="0.7" />
<line x1="54.1" y1="159.0" x2="67.3" y2="159.0" stroke="#c3c3c3" stroke-width="0.7" />
<line x1="54.1" y1="162.20000000000002" x2="67.3" y2="162.20000000000002" stroke="#c3c3c3" stroke-width="0.7" />
<rect x="23.5" y="168.7" width="13" height="12.0" fill="#ffffff" stroke="#8fa0bd" stroke-width="1" />
<rect x="23.5" y="168.7" width="13.0" height="2.7" fill="#4a7fe0" />
<line x1="27.666666666666668" y1="171.2" x2="27.666666666666668" y2="181.2" stroke="#a9b4c8" stroke-width="0.8" />
<line x1="32.333333333333336" y1="171.2" x2="32.333333333333336" y2="181.2" stroke="#a9b4c8" stroke-width="0.8" />
<line x1="23" y1="174.66666666666666" x2="37" y2="174.66666666666666" stroke="#a9b4c8" stroke-width="0.8" />
<line x1="23" y1="177.9333333333333" x2="37" y2="177.9333333333333" stroke="#a9b4c8" stroke-width="0.8" />
<rect x="28" y="173.2" width="4.6" height="4.0" fill="#f5a623" stroke="#c77d10" stroke-width="0.6"/>
<text x="24.8" y="194.94" font-family="'Liberation Sans', sans-serif" font-size="12.6" font-weight="normal" font-style="normal" fill="#2334a6" textLength="10.2" lengthAdjust="spacingAndGlyphs" stroke="#2334a6" stroke-width="0.35">Ω</text>
<text x="24.2" y="209.35" font-family="'Liberation Serif', serif" font-size="14.5" font-weight="normal" font-style="italic" fill="#2334a6" textLength="5.8" lengthAdjust="spacingAndGlyphs" stroke="#2334a6" stroke-width="0.3">f</text>
<text x="30" y="208.78" font-family="'Liberation Serif', serif" font-size="9.5" font-weight="normal" font-style="italic" fill="#2334a6" textLength="5.8" lengthAdjust="spacingAndGlyphs" stroke="#2334a6" stroke-width="0.3">x</text>
<path d="M25.2 213.9 H32.6 L36 217.2 V226 H25.2 Z" fill="#fdfdfe" stroke="#5d6270" stroke-width="1" />
<path d="M32.6 213.9 V217.2 H36" fill="none" stroke="#5d6270" stroke-width="0.8" />
<rect x="27.4" y="216.4" width="3.4" height="2.8" fill="#fff" stroke="#c0392b" stroke-width="0.8" />
<rect x="27.4" y="221.4" width="3.4" height="2.8" fill="#fff" stroke="#c0392b" stroke-width="0.8" />
<path d="M27.6 217.6 L29 219 L31.8 215.4" fill="none" stroke="#d22" stroke-width="1.2" />
<path d="M27.6 222.6 L29 224 L31.8 220.4" fill="none" stroke="#d22" stroke-width="1.2" />
<rect x="39" y="229.8" width="8" height="2.4" fill="#3e6fd0" />
<rect x="39" y="233.4" width="8" height="2.4" fill="#3e6fd0" />
<rect x="39" y="237" width="8" height="2.4" fill="#3e6fd0" />
<rect x="44.6" y="229.6" width="1.4" height="10.0" fill="#ffffff" opacity="0.6"/>
<line x1="47.4" y1="230.4" x2="47.4" y2="239" stroke="#6d86c0" stroke-width="1" />
<path d="M46.8 236 L52.4 241.6 M52.4 236 L46.8 241.6" fill="none" stroke="#e0201c" stroke-width="1.8" />
<text x="42.3" y="42.08" font-family="'Liberation Sans', sans-serif" font-size="10" font-weight="normal" font-style="normal" fill="#0c0c16" textLength="21.2" lengthAdjust="spacingAndGlyphs" >Page</text>
<text x="42.3" y="57.08" font-family="'Liberation Sans', sans-serif" font-size="10" font-weight="normal" font-style="normal" fill="#0c0c16" textLength="26.1" lengthAdjust="spacingAndGlyphs" >Levels</text>
<text x="42.3" y="72.08" font-family="'Liberation Sans', sans-serif" font-size="10" font-weight="normal" font-style="normal" fill="#0c0c16" textLength="31.1" lengthAdjust="spacingAndGlyphs" >Images</text>
<text x="42.3" y="87.28" font-family="'Liberation Sans', sans-serif" font-size="10" font-weight="normal" font-style="normal" fill="#0c0c16" textLength="27.7" lengthAdjust="spacingAndGlyphs" >Tables</text>
<text x="57.5" y="102.38" font-family="'Liberation Sans', sans-serif" font-size="10" font-weight="normal" font-style="normal" fill="#0c0c16" textLength="110.5" lengthAdjust="spacingAndGlyphs" >CH184 - Top 10 Products</text>
<text x="72.5" y="117.48" font-family="'Liberation Sans', sans-serif" font-size="10" font-weight="normal" font-style="normal" fill="#0c0c16" textLength="64.5" lengthAdjust="spacingAndGlyphs" >Product Name</text>
<text x="72.5" y="132.58" font-family="'Liberation Sans', sans-serif" font-size="10" font-weight="normal" font-style="normal" fill="#0c0c16" textLength="46.5" lengthAdjust="spacingAndGlyphs" >Total Sales</text>
<text x="72.5" y="147.88" font-family="'Liberation Sans', sans-serif" font-size="10" font-weight="normal" font-style="normal" fill="#0c0c16" textLength="50.5" lengthAdjust="spacingAndGlyphs" >Gross Profit</text>
<text x="72.5" y="162.98" font-family="'Liberation Sans', sans-serif" font-size="10" font-weight="normal" font-style="normal" fill="#0c0c16" textLength="21.5" lengthAdjust="spacingAndGlyphs" >GP%</text>
<text x="42.3" y="178.18" font-family="'Liberation Sans', sans-serif" font-size="10" font-weight="normal" font-style="normal" fill="#0c0c16" textLength="20.7" lengthAdjust="spacingAndGlyphs" >Cells</text>
<text x="42.3" y="193.38" font-family="'Liberation Sans', sans-serif" font-size="10" font-weight="normal" font-style="normal" fill="#0c0c16" textLength="38.7" lengthAdjust="spacingAndGlyphs" >Variables</text>
<text x="42.3" y="208.58" font-family="'Liberation Sans', sans-serif" font-size="10" font-weight="normal" font-style="normal" fill="#0c0c16" textLength="40.7" lengthAdjust="spacingAndGlyphs" >Formulas</text>
<text x="42.3" y="223.78" font-family="'Liberation Sans', sans-serif" font-size="10" font-weight="normal" font-style="normal" fill="#0c0c16" textLength="24.7" lengthAdjust="spacingAndGlyphs" >Extras</text>
<text x="57.5" y="238.98" font-family="'Liberation Sans', sans-serif" font-size="10" font-weight="normal" font-style="normal" fill="#0c0c16" textLength="43.5" lengthAdjust="spacingAndGlyphs" >deleterow</text>
<text x="6" y="335.88" font-family="'Liberation Sans', sans-serif" font-size="10" font-weight="normal" font-style="normal" fill="#0c0c16" textLength="44" lengthAdjust="spacingAndGlyphs" >Properties</text>
<rect x="220.3" y="326.7" width="10.8" height="10.4" fill="#c8463c" stroke="#a5322a" stroke-width="1" rx="1"/>
<path d="M222.6 329 L228.8 334.8 M228.8 329 L222.6 334.8" fill="none" stroke="#ffffff" stroke-width="1.8" />
<rect x="4.5" y="348.5" width="228" height="61" fill="#ffffff" stroke="#9aa0a8" stroke-width="1" />
<rect x="5" y="349" width="213" height="17" fill="url(#hd)" />
<line x1="5" y1="366.5" x2="218" y2="366.5" stroke="#d9dde3" stroke-width="1" />
<line x1="5" y1="383.5" x2="218" y2="383.5" stroke="#e3e3e3" stroke-width="1" />
<line x1="5" y1="400.5" x2="218" y2="400.5" stroke="#e3e3e3" stroke-width="1" />
<line x1="107.5" y1="349" x2="107.5" y2="402" stroke="#e0e0e0" stroke-width="1" />
<line x1="218.5" y1="349" x2="218.5" y2="402" stroke="#e3e3e3" stroke-width="1" />
<rect x="219" y="349" width="13" height="53" fill="#f3f3f3" />
<path d="M221.4 359 L225.4 355 L229.4 359 Z" fill="#555" stroke="none" stroke-width="1" />
<rect x="220.8" y="364.0" width="9.3" height="45.5" fill="#e9e9e9" stroke="#b5b5b5" stroke-width="1" rx="2"/>
<text x="7" y="361.58" font-family="'Liberation Sans', sans-serif" font-size="10" font-weight="normal" font-style="normal" fill="#0c0c16" textLength="38" lengthAdjust="spacingAndGlyphs" >Property</text>
<text x="110" y="361.58" font-family="'Liberation Sans', sans-serif" font-size="10" font-weight="normal" font-style="normal" fill="#0c0c16" textLength="24" lengthAdjust="spacingAndGlyphs" >Value</text>
<text x="7" y="378.38" font-family="'Liberation Sans', sans-serif" font-size="10" font-weight="normal" font-style="normal" fill="#0c0c16" textLength="27" lengthAdjust="spacingAndGlyphs" >Name</text>
<text x="110" y="378.38" font-family="'Liberation Sans', sans-serif" font-size="10" font-weight="normal" font-style="normal" fill="#0c0c16" textLength="29" lengthAdjust="spacingAndGlyphs" >CH184</text>
<text x="7" y="395.58" font-family="'Liberation Sans', sans-serif" font-size="10" font-weight="normal" font-style="normal" fill="#0c0c16" textLength="50" lengthAdjust="spacingAndGlyphs" >Description</text>
<text x="110" y="395.58" font-family="'Liberation Sans', sans-serif" font-size="10" font-weight="normal" font-style="normal" fill="#0c0c16" textLength="71" lengthAdjust="spacingAndGlyphs" >Top 10 Products</text>
<rect x="233" y="2" width="5" height="400" fill="#f0f0f0" />
</g>
</svg>
</body></html>
